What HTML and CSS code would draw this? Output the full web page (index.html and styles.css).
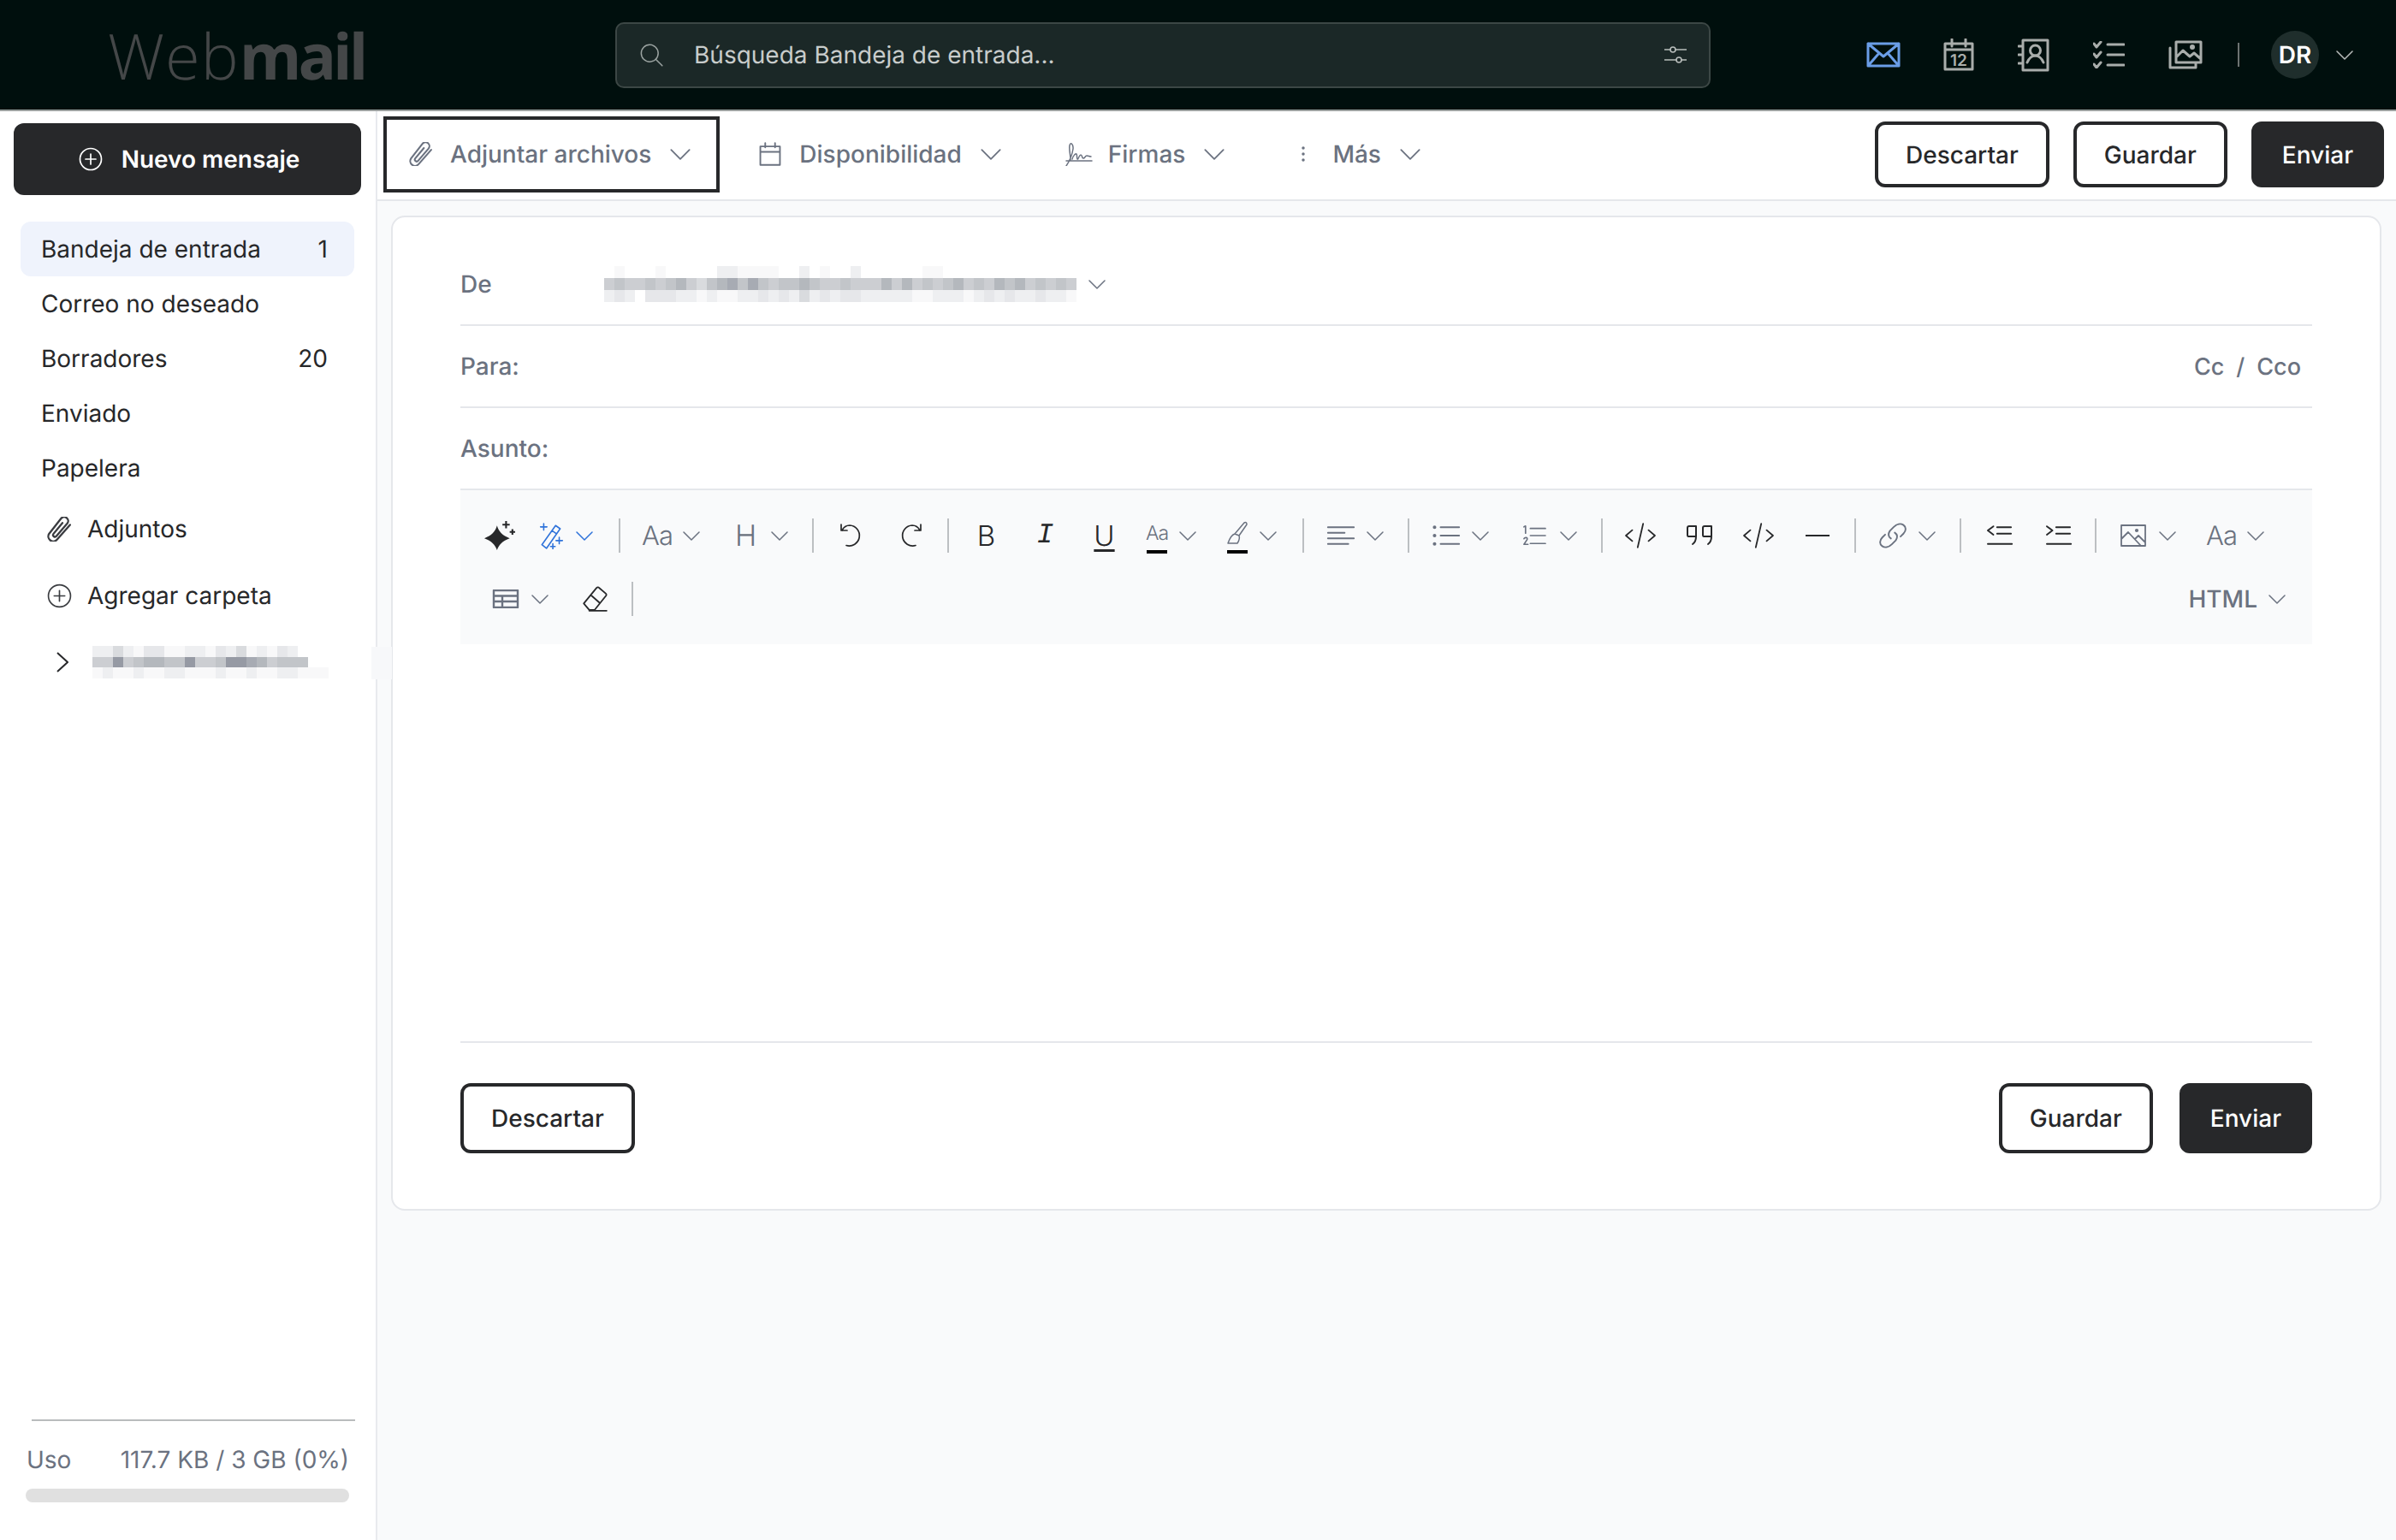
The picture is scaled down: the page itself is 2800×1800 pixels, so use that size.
FILE: index.html
```html
<!DOCTYPE html>
<html lang="es">
<head>
    <meta charset="UTF-8">
    <title>Webmail</title>
    <link rel="stylesheet" href="styles.css">
</head>
<body>
    <!-- icon set -->
    <svg class="defs" xmlns="http://www.w3.org/2000/svg">
        <symbol id="i-chev" viewBox="0 0 20 11"><path d="M1 1l9 9 9-9"/></symbol>
        <symbol id="i-clip" viewBox="3 2 18 20"><path d="M20.500 8.500 10 20.500a4 4 0 0 1-6.300-4.900L13.300 3.400a3.200 3.200 0 0 1 5 4L9.600 17.600a1.500 1.500 0 0 1-2.400-1.900L14.400 7"/></symbol>
        <symbol id="i-cal" viewBox="2 1 20 22"><path d="M3 5h18v17H3zM3 10h18M7.500 2v4M16.500 2v4"/></symbol>
        <symbol id="i-sign" viewBox="0 0 32 28"><path d="M1 22h30M1 28c4-6 7-13 8-20 .5-5-3-9-4-4s1 10 1 17M8 20c1-4 4-7 5-6s0 5 1 6 2-5 4-5 1 4 3 4 2-3 4-3 3 1 5 1"/></symbol>
        <symbol id="i-dots" viewBox="0 0 20 24"><circle cx="10" cy="5" r="1" class="solid"/><circle cx="10" cy="12" r="1" class="solid"/><circle cx="10" cy="19" r="1" class="solid"/></symbol>
        <symbol id="i-search" viewBox="0 0 24 24"><circle cx="10.500" cy="10.500" r="8.500"/><path d="M16.500 16.500 23 23"/></symbol>
        <symbol id="i-filter" viewBox="0 0 26 24"><circle cx="10" cy="6" r="3"/><circle cx="17" cy="18" r="3"/><path d="M0 6h7M13 6h13M0 18h14M20 18h6"/></symbol>
        <symbol id="i-plus" viewBox="0 0 28 28"><circle cx="14" cy="14" r="12.500"/><path d="M14 8v12M8 14h12"/></symbol>
        <symbol id="i-mail" viewBox="0 0 40 30"><path d="M2 2h36v26H2zM2 2l18 15L38 2M2 28l13-15M38 28 25 13"/></symbol>
        <symbol id="i-cal12" viewBox="0 0 36 38"><path d="M2 6h32v30H2zM2 13h32M10 1v8M26 1v8"/><text x="18" y="32" class="cal-num">12</text></symbol>
        <symbol id="i-book" viewBox="0 0 37 39"><path d="M6 2h29v35H6zM1 9h5M1 19h5M1 29h5"/><circle cx="20.500" cy="14" r="6"/><path d="M11 28c2-5 6-8 9.500-8s7.500 3 9.500 8"/></symbol>
        <symbol id="i-tasks" viewBox="0 0 37 32"><path d="M1 3l3 4 5-6M1 15l3 4 5-6M1 27l3 4 5-6M17 4h19M17 16h19M17 28h19"/></symbol>
        <symbol id="i-photos" viewBox="0 0 40 34"><path d="M9 2h29v24H9zM9 20l8-8 8 7 5-4 8 7M2 9v23h30v-6"/><circle cx="28" cy="8" r="1.500" class="solid"/></symbol>
        <symbol id="i-wand" viewBox="0 0 32 30"><path d="M5 25 20 4l5 3.500-15 21.500zM16 9.500l5 3.500M7 2v7M3.500 5.500h7M24 17v7M20.500 20.500h7M17 24v6M14.500 27h5"/></symbol>
        <symbol id="i-undo" viewBox="0 0 32 32"><path d="M5 10c2-4 5-6 9-6a12 12 0 1 1-4 23.500M4 3v7h7"/></symbol>
        <symbol id="i-redo" viewBox="0 0 32 32"><path d="M27 10c-2-4-5-6-9-6a12 12 0 1 0 4 23.500M28 3v7h-7"/></symbol>
        <symbol id="i-brush" viewBox="0 0 26 28"><path d="M2 26h11c2-3 3-6 2-9l-5-2c-3 1-6 5-8 11zM10 15 21 2c2-1 3 0 3 2L15 17"/></symbol>
        <symbol id="i-align" viewBox="0 0 28 24"><path d="M0 3h28M0 9h18M0 15h28M0 21h22"/></symbol>
        <symbol id="i-ul" viewBox="0 0 28 24"><path d="M8 3h20M8 12h20M8 21h20"/><circle cx="1.500" cy="3" r="1" class="solid"/><circle cx="1.500" cy="12" r="1" class="solid"/><circle cx="1.500" cy="21" r="1" class="solid"/></symbol>
        <symbol id="i-ol" viewBox="0 0 28 28"><path d="M9 5h19M9 14h19M9 24h19M1 3l2-1v9M1 18c1-2 5-2 4 1l-4 6h5"/></symbol>
        <symbol id="i-code" viewBox="0 0 34 28"><path d="M8 8 1 14l7 6M26 8l7 6-7 6M20 1l-6 26"/></symbol>
        <symbol id="i-quote" viewBox="0 0 32 24"><path d="M2 3c0-1 1-2 2-2h8v12H3c-1 0-1-1-1-2zM12 13c0 5-1 7-4 9M20 3c0-1 1-2 2-2h8v12h-9c-1 0-1-1-1-2zM30 13c0 5-1 7-4 9"/></symbol>
        <symbol id="i-link" viewBox="0 0 32 28"><path d="M14 17c-3-2-3-5-1-8l4-4c3-3 7-4 10-2s3 6 0 9l-3 3M18 11c3 2 3 5 1 8l-4 4c-3 3-7 4-10 2s-3-6 0-9l3-3"/></symbol>
        <symbol id="i-outdent" viewBox="0 0 28 24"><path d="M8 2 2 6.500 8 11M12 3h15M12 10h15M2 21h26"/></symbol>
        <symbol id="i-indent" viewBox="0 0 28 24"><path d="M2 2l6 4.500L2 11M12 3h15M12 10h15M2 21h26"/></symbol>
        <symbol id="i-image" viewBox="0 0 30 26"><path d="M1 1h28v24H1zM1 17l8-8 15 16M17 17l4-4 8 8"/><circle cx="19" cy="7" r="1.200" class="solid"/></symbol>
        <symbol id="i-table" viewBox="0 0 30 22"><path d="M1 1h28v20H1zM1 7.500h28M1 14h28M11 7.500V21"/></symbol>
        <symbol id="i-eraser" viewBox="0 0 30 30"><path d="M3 20 17 3c1-1 2-1 3 0l7 6c1 1 1 2 0 3L15 27H9zM11 11l9 8M9 28h19"/></symbol>
    </svg>

    <header class="topbar">
        <div class="logo"><span class="logo-thin">Web</span><span class="logo-bold">mail</span></div>
        <div class="search">
            <svg class="ic search-icon"><use href="#i-search"/></svg>
            <span class="search-text">Búsqueda Bandeja de entrada...</span>
            <svg class="ic filter-icon"><use href="#i-filter"/></svg>
        </div>
        <nav class="apps">
            <svg class="ic app-mail"><use href="#i-mail"/></svg>
            <svg class="ic app-cal"><use href="#i-cal12"/></svg>
            <svg class="ic app-book"><use href="#i-book"/></svg>
            <svg class="ic app-tasks"><use href="#i-tasks"/></svg>
            <svg class="ic app-photos"><use href="#i-photos"/></svg>
            <span class="apps-sep"></span>
            <span class="avatar">DR</span>
            <svg class="ic chev avatar-chev"><use href="#i-chev"/></svg>
        </nav>
    </header>

    <div class="layout">
        <aside class="sidebar">
            <button class="new-msg">
                <svg class="ic new-icon"><use href="#i-plus"/></svg>
                Nuevo mensaje
            </button>
            <ul class="folders">
                <li class="folder active"><span>Bandeja de entrada</span><span>1</span></li>
                <li class="folder"><span>Correo no deseado</span></li>
                <li class="folder"><span>Borradores</span><span>20</span></li>
                <li class="folder"><span>Enviado</span></li>
                <li class="folder"><span>Papelera</span></li>
            </ul>
            <div class="side-link"><svg class="ic side-icon"><use href="#i-clip"/></svg>Adjuntos</div>
            <div class="side-link"><svg class="ic side-icon"><use href="#i-plus"/></svg>Agregar carpeta</div>
            <div class="account">
                <svg class="account-arrow" viewBox="0 0 14 24"><path d="M1 1l12 11L1 23"/></svg>
                <svg class="mosaic" data-cell-w="12" data-cell-h="12.700"
                     data-rows="22421331122132412132,55956776695569987566 6,1211211221112112112211 1"></svg>
            </div>
            <div class="usage">
                <div class="usage-line"></div>
                <div class="usage-text"><span>Uso</span><span>117.7 KB / 3 GB (0%)</span></div>
                <div class="usage-bar"></div>
            </div>
            <div class="resize-handle"></div>
        </aside>

        <main class="main">
            <div class="actions">
                <button class="action attach">
                    <svg class="ic action-icon"><use href="#i-clip"/></svg>
                    <span>Adjuntar archivos</span>
                    <svg class="ic chev action-chev"><use href="#i-chev"/></svg>
                </button>
                <button class="action">
                    <svg class="ic action-icon"><use href="#i-cal"/></svg>
                    <span>Disponibilidad</span>
                    <svg class="ic chev action-chev"><use href="#i-chev"/></svg>
                </button>
                <button class="action">
                    <svg class="ic sign-icon"><use href="#i-sign"/></svg>
                    <span>Firmas</span>
                    <svg class="ic chev action-chev"><use href="#i-chev"/></svg>
                </button>
                <button class="action more">
                    <svg class="ic dots-icon"><use href="#i-dots"/></svg>
                    <span>Más</span>
                    <svg class="ic chev action-chev"><use href="#i-chev"/></svg>
                </button>
                <div class="action-btns">
                    <button class="btn">Descartar</button>
                    <button class="btn">Guardar</button>
                    <button class="btn btn-dark">Enviar</button>
                </div>
            </div>

            <section class="card">
                <div class="field">
                    <label class="field-label">De</label>
                    <svg class="mosaic" data-cell-w="12" data-cell-h="14"
                         data-rows="0100010000022111100201002000000110000000000000,5655656754678686566765565557575656756576756565,2320333221211223232423233222221122212323223221"></svg>
                    <svg class="ic chev from-chev"><use href="#i-chev"/></svg>
                </div>
                <div class="field">
                    <label class="field-label">Para:</label>
                    <span class="cc">Cc<i>/</i>Cco</span>
                </div>
                <div class="field">
                    <label class="field-label">Asunto:</label>
                </div>

                <div class="editor-bar">
                    <div class="editor-row">
                        <div class="tool"><svg class="sparkle" viewBox="0 0 34 34"><path d="M14 6c2 7 6 11 14 14-8 3-12 7-14 13-2-6-6-10-14-13 8-3 12-7 14-14z"/><path class="sparkle-plus" d="M24 1v8M20 5h8M31 10v6M28 13h6"/></svg></div>
                        <div class="tool drop wand">
                            <svg class="ic icon"><use href="#i-wand"/></svg>
                            <svg class="ic chev"><use href="#i-chev"/></svg>
                        </div>
                        <span class="sep"></span>
                        <div class="tool drop muted"><span class="glyph">Aa</span><svg class="ic chev"><use href="#i-chev"/></svg></div>
                        <div class="tool drop muted"><span class="glyph glyph-h">H</span><svg class="ic chev"><use href="#i-chev"/></svg></div>
                        <span class="sep"></span>
                        <div class="tool"><svg class="ic icon-sm"><use href="#i-undo"/></svg></div>
                        <div class="tool"><svg class="ic icon-sm"><use href="#i-redo"/></svg></div>
                        <span class="sep"></span>
                        <div class="tool"><span class="mark">B</span></div>
                        <div class="tool"><span class="mark mark-i">I</span></div>
                        <div class="tool"><span class="mark mark-u">U</span></div>
                        <div class="tool color muted">
                            <span class="swatch"><span class="glyph-sm">Aa</span><span class="swatch-bar"></span></span>
                            <svg class="ic chev"><use href="#i-chev"/></svg>
                        </div>
                        <div class="tool color muted">
                            <span class="swatch"><svg class="ic brush"><use href="#i-brush"/></svg><span class="swatch-bar"></span></span>
                            <svg class="ic chev"><use href="#i-chev"/></svg>
                        </div>
                        <span class="sep"></span>
                        <div class="tool drop muted"><svg class="ic icon-list"><use href="#i-align"/></svg><svg class="ic chev"><use href="#i-chev"/></svg></div>
                        <span class="sep"></span>
                        <div class="tool drop muted"><svg class="ic icon-list"><use href="#i-ul"/></svg><svg class="ic chev"><use href="#i-chev"/></svg></div>
                        <div class="tool drop muted"><svg class="ic icon-list"><use href="#i-ol"/></svg><svg class="ic chev"><use href="#i-chev"/></svg></div>
                        <span class="sep"></span>
                        <div class="tool"><svg class="ic icon-sm"><use href="#i-code"/></svg></div>
                        <div class="tool"><svg class="ic icon-quote"><use href="#i-quote"/></svg></div>
                        <div class="tool"><svg class="ic icon-sm"><use href="#i-code"/></svg></div>
                        <div class="tool"><span class="hr-icon"></span></div>
                        <span class="sep"></span>
                        <div class="tool drop muted"><svg class="ic icon-sm"><use href="#i-link"/></svg><svg class="ic chev"><use href="#i-chev"/></svg></div>
                        <span class="sep"></span>
                        <div class="tool"><svg class="ic icon-list"><use href="#i-outdent"/></svg></div>
                        <div class="tool"><svg class="ic icon-list"><use href="#i-indent"/></svg></div>
                        <span class="sep"></span>
                        <div class="tool drop muted"><svg class="ic icon-list"><use href="#i-image"/></svg><svg class="ic chev"><use href="#i-chev"/></svg></div>
                        <div class="tool drop muted"><span class="glyph">Aa</span><svg class="ic chev"><use href="#i-chev"/></svg></div>
                    </div>
                    <div class="editor-row">
                        <div class="tool drop muted table-tool"><svg class="ic icon-table"><use href="#i-table"/></svg><svg class="ic chev"><use href="#i-chev"/></svg></div>
                        <div class="tool"><svg class="ic icon-sm"><use href="#i-eraser"/></svg></div>
                        <span class="sep"></span>
                        <div class="html-mode">HTML<svg class="ic chev"><use href="#i-chev"/></svg></div>
                    </div>
                </div>

                <div class="editor-body"></div>

                <div class="card-footer">
                    <button class="btn btn-tall">Descartar</button>
                    <div class="card-footer-right">
                        <button class="btn btn-tall">Guardar</button>
                        <button class="btn btn-tall btn-dark">Enviar</button>
                    </div>
                </div>
            </section>
        </main>
    </div>

    <script src="mosaic.js"></script>
</body>
</html>
```

FILE: styles.css
```css
* {
    box-sizing: border-box;
}

body {
    margin: 0;
    height: 1800px;
    overflow: hidden;
    background-color: #f9fafb;
    color: #27282a;
    font-family: Inter, "Noto Sans", sans-serif;
    font-size: 28px;
    text-rendering: geometricPrecision;
}

button {
    font-family: inherit;
    font-size: inherit;
    text-rendering: inherit;
    background: none;
    border: none;
    padding: 0;
}

.defs {
    display: none;
}

.ic {
    fill: none;
    stroke: currentColor;
    stroke-width: 1.5;
    stroke-linecap: round;
    stroke-linejoin: round;
    overflow: visible;
}

.solid {
    fill: currentColor;
}

.chev {
    width: 20px;
    height: 11px;
    flex: none;
    stroke-width: 1.5;
    color: #6b7280;
}

/* top bar */
.topbar {
    display: flex;
    align-items: center;
    height: 130px;
    background-color: #000f0d;
    border-bottom: 2px solid #9ba09f;
}

.logo {
    width: 719px;
    padding-left: 126px;
    font-family: "Open Sans", sans-serif;
    font-size: 74px;
    color: #444748;
}

.logo-thin {
    font-weight: 300;
    letter-spacing: 1px;
}

.logo-bold {
    font-weight: 700;
    letter-spacing: -4px;
}

.search {
    display: flex;
    align-items: center;
    width: 1280px;
    height: 77px;
    padding: 0 26px;
    background-color: #1b2827;
    border: 2px solid #3c4745;
    border-radius: 10px;
    color: #c8cccb;
}

.search-icon {
    width: 28px;
    height: 28px;
    margin-right: 36px;
    color: #9ba3a1;
    stroke-width: 1.3;
}

.search-text {
    flex: 1;
}

.filter-icon {
    width: 26px;
    height: 24px;
    color: #b8bdbb;
    stroke-width: 1.6;
}

.apps {
    display: flex;
    align-items: center;
    margin-left: auto;
    padding-right: 50px;
    color: #a9adab;
}

.app-mail {
    width: 40px;
    height: 30px;
    color: #6a9de6;
    stroke-width: 3;
    margin-right: 50px;
}

.app-cal {
    width: 36px;
    height: 38px;
    stroke-width: 3;
    margin-right: 51px;
}

.cal-num {
    font-family: Inter, sans-serif;
    font-size: 19px;
    font-weight: 600;
    fill: currentColor;
    stroke: none;
    text-anchor: middle;
}

.app-book {
    width: 37px;
    height: 39px;
    stroke-width: 3;
    margin-right: 51px;
}

.app-tasks {
    width: 37px;
    height: 32px;
    stroke-width: 3;
    margin-right: 51px;
}

.app-photos {
    width: 40px;
    height: 34px;
    stroke-width: 3;
    margin-right: 41px;
}

.apps-sep {
    width: 2px;
    height: 28px;
    background-color: #6d7372;
    margin-right: 37px;
}

.avatar {
    display: flex;
    align-items: center;
    justify-content: center;
    width: 56px;
    height: 56px;
    border-radius: 50%;
    background-color: #1f2e2c;
    color: #fff;
    font-weight: 600;
}

.avatar-chev {
    margin-left: 20px;
    color: #b8bdbb;
}

/* layout */
.layout {
    display: flex;
    height: 1670px;
}

.sidebar {
    position: relative;
    display: flex;
    flex-direction: column;
    width: 441px;
    flex: none;
    background-color: #fff;
    border-right: 2px solid #e8eaee;
}

.new-msg {
    display: flex;
    align-items: center;
    justify-content: center;
    gap: 22px;
    height: 84px;
    margin: 14px 17px 0 16px;
    padding-left: 4px;
    background-color: #27282a;
    border-radius: 12px;
    color: #fff;
    font-weight: 600;
}

.new-icon {
    width: 28px;
    height: 28px;
    stroke-width: 1.700;
}

.folders {
    list-style: none;
    margin: 31px 0 0;
    padding: 0;
}

.folder {
    display: flex;
    justify-content: space-between;
    align-items: center;
    height: 64px;
    margin: 0 25px 0 24px;
    padding: 0 31px 0 24px;
    border-radius: 12px;
}

.folder.active {
    background-color: #eff3fc;
}

.side-link {
    display: flex;
    align-items: center;
    gap: 18px;
    height: 78px;
    padding-left: 55px;
}

.side-icon {
    width: 29px;
    height: 29px;
    stroke-width: 1.600;
    color: #3a3c40;
}

.account {
    display: flex;
    align-items: center;
    gap: 28px;
    height: 78px;
    padding-left: 66px;
}

.account-arrow {
    width: 14px;
    height: 24px;
    fill: none;
    stroke: #27282a;
    stroke-width: 2;
}

.mosaic {
    display: block;
    flex: none;
    shape-rendering: crispEdges;
}

.usage {
    margin-top: auto;
    padding: 0 31px 44px 30px;
    color: #6b7280;
}

.usage-line {
    height: 2px;
    margin: 0 -7px 0 7px;
    background-color: #b9bcbd;
}

.usage-text {
    display: flex;
    justify-content: space-between;
    align-items: center;
    height: 34px;
    margin-top: 28px;
    padding: 0 0 0 1px;
}

.usage-bar {
    height: 16px;
    margin-top: 17px;
    background-color: #e0e0e0;
    border-radius: 8px;
}

.resize-handle {
    position: absolute;
    top: 626px;
    right: -19px;
    width: 24px;
    height: 38px;
    background-color: #f7f8fa;
}

/* actions bar */
.main {
    flex: 1;
    min-width: 0;
}

.actions {
    display: flex;
    align-items: center;
    height: 105px;
    padding: 0 14px 2px 7px;
    background-color: #fff;
    border-bottom: 2px solid #e5e7eb;
}

.action {
    display: flex;
    align-items: center;
    margin-left: 75px;
    padding-bottom: 1px;
    color: #6b7280;
    font-weight: 500;
}

.action.attach {
    height: 89px;
    margin-left: 0;
    padding: 0 30px 1px 26px;
    border: 4px solid #27282a;
}

.attach + .action {
    margin-left: 45px;
}

.action.more {
    margin-left: 82px;
}

.action-icon {
    width: 28px;
    height: 28px;
    margin-right: 20px;
}

.sign-icon {
    width: 32px;
    height: 28px;
    margin-right: 18px;
}

.dots-icon {
    width: 20px;
    height: 24px;
    margin-right: 24px;
}

.action-chev {
    width: 24px;
    height: 13px;
    margin-left: 22px;
}

.action-btns {
    display: flex;
    gap: 28px;
    margin-left: auto;
}

.btn {
    height: 77px;
    padding: 0 32px;
    border: 4px solid #27282a;
    border-radius: 12px;
    background-color: #fff;
    color: #27282a;
    font-weight: 500;
}

.btn-tall {
    height: 82px;
}

.btn-dark {
    background-color: #27282a;
    color: #fff;
}

/* compose card */
.card {
    margin: 17px 17px 0 16px;
    padding: 31px 79px 65px;
    background-color: #fff;
    border: 2px solid #e5e7eb;
    border-radius: 16px;
}

.field {
    display: flex;
    align-items: center;
    height: 96px;
    border-bottom: 2px solid #e5e7eb;
    color: #6b7280;
    font-weight: 500;
}

.field-label {
    width: 168px;
}

.from-chev {
    margin-left: 14px;
}

.cc {
    margin-left: auto;
    padding-right: 13px;
    font-size: 27px;
}

.cc i {
    margin: 0 14px;
    font-style: normal;
}

/* editor toolbar */
.editor-bar {
    padding: 16px 0 16px 11px;
    background-color: #f9fafb;
}

.editor-row {
    display: flex;
    align-items: center;
    height: 74px;
}

.tool {
    display: flex;
    align-items: center;
    justify-content: center;
    width: 69px;
    flex: none;
    color: #27282a;
}

.tool.muted {
    color: #6b7280;
}

.tool.drop {
    justify-content: flex-start;
    gap: 12px;
    width: 103px;
    padding-left: 16px;
}

.tool.wand {
    margin-left: -7px;
    gap: 10px;
    color: #2f73da;
}

.wand .icon {
    width: 36px;
    height: 32px;
}

.wand .chev {
    color: #2f73da;
}

.table-tool {
    margin-left: 8px;
}

.tool.color {
    justify-content: flex-start;
    gap: 13px;
    width: 94px;
    padding-left: 14px;
}

.sep {
    flex: none;
    width: 2px;
    height: 40px;
    margin: 0 9px;
    background-color: #bcbfc2;
}

.sparkle {
    width: 36px;
    height: 36px;
    fill: #27282a;
}

.sparkle-plus {
    fill: none;
    stroke: #27282a;
    stroke-width: 2;
}

.icon-sm {
    width: 36px;
    height: 32px;
    flex: none;
    stroke-width: 1.700;
}

.icon-quote {
    width: 36px;
    height: 24px;
    flex: none;
    stroke-width: 2;
}

.icon-list {
    width: 36px;
    height: 26px;
    flex: none;
    stroke-width: 1.800;
}

.icon-table {
    width: 36px;
    height: 22px;
    flex: none;
    stroke-width: 2.400;
}

.glyph {
    width: 36px;
    text-align: center;
    font-size: 31px;
    font-weight: 300;
    letter-spacing: -1px;
}

.glyph-h {
    font-size: 34px;
}

.glyph-sm {
    font-size: 23px;
    font-weight: 300;
    line-height: 36px;
    letter-spacing: -1px;
}

.mark {
    font-size: 33px;
    font-weight: 300;
    line-height: 40px;
}

.mark-i {
    font-family: "Liberation Mono", monospace;
    font-style: italic;
}

.mark-u {
    text-decoration: underline;
    text-decoration-thickness: 3px;
    text-underline-offset: 4px;
}

.swatch {
    display: flex;
    flex-direction: column;
    align-items: center;
    width: 26px;
}

.swatch-bar {
    width: 24px;
    height: 4px;
    margin-top: 2px;
    background-color: #000;
}

.brush {
    width: 26px;
    height: 36px;
}

.hr-icon {
    width: 28px;
    height: 2px;
    background-color: #27282a;
}

.html-mode {
    display: flex;
    align-items: center;
    gap: 13px;
    margin-left: auto;
    padding-right: 31px;
    color: #6b7280;
    font-weight: 500;
}

.editor-body {
    height: 466px;
    border-bottom: 2px solid #e5e7eb;
}

.card-footer {
    display: flex;
    justify-content: space-between;
    padding-top: 47px;
}

.card-footer-right {
    display: flex;
    gap: 31px;
}
```

FILE: mosaic.js
```js
// pixelated blocks, one digit per cell (0 = empty, 9 = darkest)
const shades = ['#ffffff', '#f8f8f9', '#eeeff1', '#e6e7ea', '#d9dbde', '#ccced2', '#c2c5c9', '#b4b8bd', '#a7abb3', '#969aa4'];

document.querySelectorAll('.mosaic').forEach(svg => {
    const w = Number(svg.dataset.cellW);
    const h = Number(svg.dataset.cellH);
    const rows = svg.dataset.rows.split(',').map(r => r.replace(/ /g, ''));
    const cols = Math.max(...rows.map(r => r.length));
    svg.setAttribute('width', cols * w);
    svg.setAttribute('height', rows.length * h);
    svg.innerHTML = rows.map((row, y) => [...row].map((d, x) =>
        d === '0' ? '' : `<rect x="${x * w}" y="${y * h}" width="${w}" height="${h}" fill="${shades[d]}"/>`
    ).join('')).join('');
});
```
